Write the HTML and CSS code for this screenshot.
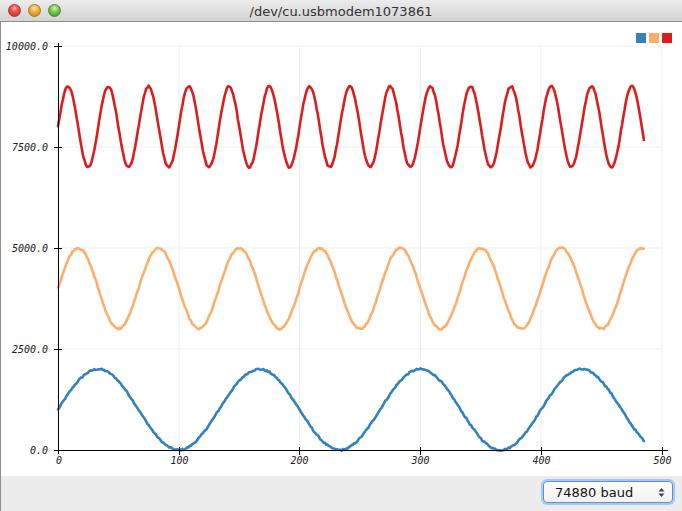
FILE: index.html
```html
<!DOCTYPE html>
<html>
<head>
<meta charset="utf-8">
<link rel="stylesheet" href="styles.css">
</head>
<body>
<div class="window">
  <div class="titlebar">
    <div class="lights">
      <span class="light red"></span>
      <span class="light yellow"></span>
      <span class="light green"></span>
    </div>
    <div class="title">/dev/cu.usbmodem1073861</div>
    <div class="spacer"></div>
  </div>
  <div class="plot">
    <svg id="chart" class="chart" width="682" height="454" viewBox="0 0 682 454">
      <g class="grid">
        <line x1="58" y1="24" x2="662" y2="24"/>
        <line x1="58" y1="125" x2="662" y2="125"/>
        <line x1="58" y1="226" x2="662" y2="226"/>
        <line x1="58" y1="327" x2="662" y2="327"/>
        <line x1="179" y1="24" x2="179" y2="428"/>
        <line x1="299.5" y1="24" x2="299.5" y2="428"/>
        <line x1="420.5" y1="24" x2="420.5" y2="428"/>
        <line x1="541" y1="24" x2="541" y2="428"/>
        <line x1="662" y1="24" x2="662" y2="428"/>
      </g>
      <g id="series"></g>
      <g class="axis">
        <line x1="58.5" y1="21" x2="58.5" y2="432"/>
        <line x1="54" y1="428.5" x2="668" y2="428.5"/>
        <line x1="54" y1="24.5" x2="62" y2="24.5"/>
        <line x1="54" y1="125.5" x2="62" y2="125.5"/>
        <line x1="54" y1="226.5" x2="62" y2="226.5"/>
        <line x1="54" y1="327.5" x2="62" y2="327.5"/>
        <line x1="179.5" y1="425" x2="179.5" y2="433"/>
        <line x1="299.5" y1="425" x2="299.5" y2="433"/>
        <line x1="420.5" y1="425" x2="420.5" y2="433"/>
        <line x1="541.5" y1="425" x2="541.5" y2="433"/>
        <line x1="662.5" y1="425" x2="662.5" y2="433"/>
      </g>
      <g class="ylabels">
        <text x="48" y="28">10000.0</text>
        <text x="48" y="129">7500.0</text>
        <text x="48" y="230">5000.0</text>
        <text x="48" y="331">2500.0</text>
        <text x="48" y="432">0.0</text>
      </g>
      <g class="xlabels">
        <text x="59" y="442">0</text>
        <text x="179.5" y="442">100</text>
        <text x="299.5" y="442">200</text>
        <text x="420.5" y="442">300</text>
        <text x="541.5" y="442">400</text>
        <text x="662.5" y="442">500</text>
      </g>
      <g class="legend">
        <rect x="636" y="11" width="10" height="10" fill="#3182bd"/>
        <rect x="649" y="11" width="10" height="10" fill="#fdae6b"/>
        <rect x="662" y="11" width="10" height="10" fill="#dc1d1d"/>
      </g>
    </svg>
  </div>
  <div class="bottombar">
    <div class="baud">
      <span class="baud-text">74880 baud</span>
      <svg class="arrows" width="7" height="11" viewBox="0 0 7 11">
        <path d="M3.5 1 L6.5 4.5 L0.5 4.5 Z" fill="#444"/>
        <path d="M3.5 10 L6.5 6.5 L0.5 6.5 Z" fill="#444"/>
      </svg>
    </div>
  </div>
</div>
<script src="script.js"></script>
</body>
</html>
```

FILE: styles.css
```css
html, body {
  margin: 0;
  padding: 0;
  background: #ffffff;
}
.window {
  width: 682px;
  height: 511px;
  display: flex;
  flex-direction: column;
  overflow: hidden;
}
.titlebar {
  height: 21px;
  flex: 0 0 21px;
  display: grid;
  grid-template-columns: 1fr auto 1fr;
  align-items: center;
  background: linear-gradient(#ececec, #d3d3d3);
  border-bottom: 1px solid #8e8e8e;
}
.lights {
  display: flex;
  gap: 7px;
  padding-left: 8px;
  align-items: center;
}
.light {
  width: 13px;
  height: 13px;
  border-radius: 50%;
  box-sizing: border-box;
  display: block;
}
.light.red {
  background: radial-gradient(circle at 50% 30%, #ffb3ae 0, #f0554d 35%, #c3241c 100%);
  border: 1px solid #9e3a35;
}
.light.yellow {
  background: radial-gradient(circle at 50% 30%, #ffe3a8 0, #f2b13c 40%, #c27d12 100%);
  border: 1px solid #a3762d;
}
.light.green {
  background: radial-gradient(circle at 50% 30%, #d4f5b6 0, #7ccb4f 40%, #3d8a22 100%);
  border: 1px solid #4d8a36;
}
.title {
  font-family: "DejaVu Sans", "Liberation Sans", sans-serif;
  font-size: 13px;
  color: #333;
  padding-top: 1px;
}
.plot {
  height: 454px;
  flex: 0 0 454px;
  background: #ffffff;
  box-shadow: inset 1px 0 0 #8f8f8f;
}
.chart {
  display: block;
}
.grid line {
  stroke: #efefef;
  stroke-width: 1;
}
.axis line {
  stroke: #000;
  stroke-width: 1;
  shape-rendering: crispEdges;
}
.ylabels text, .xlabels text {
  font-family: "DejaVu Sans Mono", "Liberation Mono", monospace;
  font-style: italic;
  font-size: 10px;
  fill: #222;
}
.ylabels text {
  text-anchor: end;
}
.xlabels text {
  text-anchor: middle;
}
.series-line {
  fill: none;
  stroke-width: 2.6;
  stroke-linejoin: round;
  stroke-linecap: round;
}
.bottombar {
  flex: 1 1 auto;
  background: #ececec;
  box-shadow: inset 1px 0 0 #8f8f8f;
  display: flex;
  justify-content: flex-end;
  align-items: flex-start;
  padding-top: 5px;
  padding-right: 9px;
}
.baud {
  width: 130px;
  height: 22px;
  box-sizing: border-box;
  border: 1px solid #5b8fd6;
  border-radius: 4px;
  box-shadow: 0 0 0 2px #a9c8ef;
  background: linear-gradient(#ffffff, #f1f1f1);
  display: flex;
  align-items: center;
  justify-content: space-between;
  padding: 0 7px 0 11px;
}
.baud-text {
  font-family: "DejaVu Sans", "Liberation Sans", sans-serif;
  font-size: 13px;
  color: #111;
}
.arrows {
  display: block;
}
```

FILE: script.js
```js
(function () {
  var g = document.getElementById('series');
  var ns = 'http://www.w3.org/2000/svg';
  var seed = 12345;
  function rnd() {
    seed = (seed * 1103515245 + 12345) % 2147483648;
    return seed / 2147483648;
  }
  function xp(u) { return 58 + u * 1.208; }
  function yp(v) { return 428 - v * 0.0404; }
  var series = [
    { color: '#3182bd', off: 1000, per: 133.3 },
    { color: '#fdae6b', off: 4000, per: 66.67 },
    { color: '#dc1d1d', off: 8000, per: 33.33 }
  ];
  series.forEach(function (s) {
    var pts = [];
    for (var i = 0; i <= 485; i++) {
      var v = s.off + 1000 * Math.sin(2 * Math.PI * i / s.per) + (rnd() - 0.5) * 40;
      pts.push(xp(i).toFixed(2) + ',' + yp(v).toFixed(2));
    }
    var pl = document.createElementNS(ns, 'polyline');
    pl.setAttribute('points', pts.join(' '));
    pl.setAttribute('class', 'series-line');
    pl.setAttribute('stroke', s.color);
    g.appendChild(pl);
  });
})();
```
